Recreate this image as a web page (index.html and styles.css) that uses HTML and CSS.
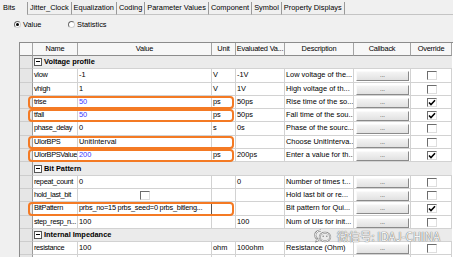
FILE: index.html
```html
<!DOCTYPE html>
<html lang="en">
<head>
    <meta charset="UTF-8">
    <title>Bits</title>
    <link rel="stylesheet" href="styles.css">
</head>
<body>
    <div class="tabs">
        <span class="tab active">Bits</span>
        <span class="tab">Jitter_Clock</span>
        <span class="tab">Equalization</span>
        <span class="tab">Coding</span>
        <span class="tab">Parameter Values</span>
        <span class="tab">Component</span>
        <span class="tab">Symbol</span>
        <span class="tab">Property Displays</span>
        <span class="tab-fill"></span>
    </div>

    <div class="mode">
        <label class="radio on"><span class="dot"></span>Value</label>
        <label class="radio"><span class="dot"></span>Statistics</label>
    </div>

    <div class="grid">
        <div class="row head">
            <div class="gut"></div>
            <div>Name</div>
            <div>Value</div>
            <div>Unit</div>
            <div>Evaluated Va...</div>
            <div>Description</div>
            <div>Callback</div>
            <div>Override</div>
        </div>

        <div class="row section">
            <div class="gut"></div>
            <div class="title"><span class="fold"></span>Voltage profile</div>
        </div>
        <div class="row">
            <div class="gut"></div>
            <div>vlow</div>
            <div>-1</div>
            <div>V</div>
            <div>-1V</div>
            <div>Low voltage of the...</div>
            <div><span class="dots">...</span></div>
            <div><span class="chk"></span></div>
        </div>
        <div class="row">
            <div class="gut"></div>
            <div>vhigh</div>
            <div>1</div>
            <div>V</div>
            <div>1V</div>
            <div>High voltage of th...</div>
            <div><span class="dots">...</span></div>
            <div><span class="chk"></span></div>
        </div>
        <div class="row mark">
            <div class="gut"></div>
            <div>trise</div>
            <div class="blue">50</div>
            <div>ps</div>
            <div>50ps</div>
            <div>Rise time of the so...</div>
            <div><span class="dots">...</span></div>
            <div><span class="chk"><svg viewBox="0 0 8 7"><path d="M1 3.4 L3 5.6 L7 1.2" fill="none" stroke="#000" stroke-width="1.5"/></svg></span></div>
        </div>
        <div class="row mark">
            <div class="gut"></div>
            <div>tfall</div>
            <div class="blue">50</div>
            <div>ps</div>
            <div>50ps</div>
            <div>Fall time of the sou...</div>
            <div><span class="dots">...</span></div>
            <div><span class="chk"><svg viewBox="0 0 8 7"><path d="M1 3.4 L3 5.6 L7 1.2" fill="none" stroke="#000" stroke-width="1.5"/></svg></span></div>
        </div>
        <div class="row">
            <div class="gut"></div>
            <div>phase_delay</div>
            <div>0</div>
            <div>s</div>
            <div>0s</div>
            <div>Phase of the sourc...</div>
            <div><span class="dots">...</span></div>
            <div><span class="chk"></span></div>
        </div>
        <div class="row mark">
            <div class="gut"></div>
            <div>UIorBPS</div>
            <div>UnitInterval</div>
            <div></div>
            <div></div>
            <div>Choose UnitInterva...</div>
            <div><span class="dots">...</span></div>
            <div><span class="chk"></span></div>
        </div>
        <div class="row mark">
            <div class="gut"></div>
            <div>UIorBPSValue</div>
            <div class="blue">200</div>
            <div>ps</div>
            <div>200ps</div>
            <div>Enter a value for th...</div>
            <div><span class="dots">...</span></div>
            <div><span class="chk"><svg viewBox="0 0 8 7"><path d="M1 3.4 L3 5.6 L7 1.2" fill="none" stroke="#000" stroke-width="1.5"/></svg></span></div>
        </div>

        <div class="row section">
            <div class="gut"></div>
            <div class="title"><span class="fold"></span>Bit Pattern</div>
        </div>
        <div class="row">
            <div class="gut"></div>
            <div>repeat_count</div>
            <div>0</div>
            <div></div>
            <div>0</div>
            <div>Number of times t...</div>
            <div><span class="dots">...</span></div>
            <div><span class="chk"></span></div>
        </div>
        <div class="row">
            <div class="gut"></div>
            <div>hold_last_bit</div>
            <div><span class="chk"></span></div>
            <div></div>
            <div></div>
            <div>Hold last bit or re...</div>
            <div><span class="dots">...</span></div>
            <div><span class="chk"></span></div>
        </div>
        <div class="row mark">
            <div class="gut"></div>
            <div>BitPattern</div>
            <div class="edit">prbs_no=15 prbs_seed=0 prbs_bitleng...</div>
            <div></div>
            <div></div>
            <div>Bit pattern for Qui...</div>
            <div><span class="dots">...</span></div>
            <div><span class="chk"><svg viewBox="0 0 8 7"><path d="M1 3.4 L3 5.6 L7 1.2" fill="none" stroke="#000" stroke-width="1.5"/></svg></span></div>
        </div>
        <div class="row">
            <div class="gut"></div>
            <div>step_resp_n...</div>
            <div>100</div>
            <div></div>
            <div>100</div>
            <div>Num of UIs for init...</div>
            <div><span class="dots">...</span></div>
            <div><span class="chk"></span></div>
        </div>

        <div class="row section">
            <div class="gut"></div>
            <div class="title"><span class="fold"></span>Internal Impedance</div>
        </div>
        <div class="row">
            <div class="gut"></div>
            <div>resistance</div>
            <div>100</div>
            <div>ohm</div>
            <div>100ohm</div>
            <div>Resistance (Ohm)</div>
            <div><span class="dots">...</span></div>
            <div><span class="chk"></span></div>
        </div>
        <div class="row">
            <div class="gut"></div>
            <div></div>
            <div></div>
            <div></div>
            <div></div>
            <div></div>
            <div></div>
            <div></div>
        </div>
    </div>

    <div class="wm">
        <svg class="wm-icon" viewBox="0 0 18 14" width="18" height="14">
            <path d="M7 1.5 C3.6 1.5 1.2 3.6 1.2 6.2 C1.2 7.7 2 8.9 3.2 9.8 L2.7 11.8 L5 10.6" fill="none" stroke="#777" stroke-width="2"/>
            <path d="M7 1.5 C3.6 1.5 1.2 3.6 1.2 6.2 C1.2 7.7 2 8.9 3.2 9.8 L2.7 11.8 L5 10.6" fill="none" stroke="#f6f6f6" stroke-width="1"/>
            <ellipse cx="11" cy="8" rx="5.2" ry="4.2" fill="none" stroke="#777" stroke-width="2"/>
            <ellipse cx="11" cy="8" rx="5.2" ry="4.2" fill="none" stroke="#f6f6f6" stroke-width="1"/>
            <circle cx="9.2" cy="7.2" r="0.8" fill="#888"/>
            <circle cx="12.8" cy="7.2" r="0.8" fill="#888"/>
        </svg>
        <span>微信号: IDAJ-CHINA</span>
    </div>
</body>
</html>
```

FILE: styles.css
```css
body {
    margin: 0;
    width: 453px;
    height: 257px;
    overflow: hidden;
    position: relative;
    background: #f0f0f0;
    font-family: "Liberation Sans", Arial, sans-serif;
    font-size: 7.4px;
    color: #000;
}

/* tab strip */
.tabs {
    display: flex;
    height: 15px;
}
.tab {
    margin-top: 2px;
    padding: 0 2px 0 2px;
    line-height: 11px;
    border-left: 1px solid #9a9a9a;
    border-bottom: 1px solid #c4c4c4;
    white-space: nowrap;
}
.tab.active {
    width: 27px;
    box-sizing: border-box;
    margin-top: 0;
    padding: 2px 0 0 3px;
    border: 0;
}
.tab-fill {
    flex: 1;
    margin-top: 2px;
    border-left: 1px solid #9a9a9a;
    border-bottom: 1px solid #c4c4c4;
}

/* value / statistics */
.mode {
    display: flex;
    height: 27px;
    box-sizing: border-box;
    padding: 6px 0 0 14px;
}
.radio {
    display: flex;
    align-items: center;
    gap: 2px;
    width: 54px;
    height: 7px;
}
.dot {
    width: 7px;
    height: 7px;
    box-sizing: border-box;
    border-radius: 50%;
    border: 1px solid;
    border-color: #6a6a6a #d0d0d0 #d0d0d0 #6a6a6a;
    background: #fff;
    position: relative;
}
.radio.on .dot::after {
    content: "";
    position: absolute;
    left: 1px;
    top: 1px;
    width: 3px;
    height: 3px;
    border-radius: 50%;
    background: #000;
}

/* parameter table */
.grid {
    margin-left: 19px;
    width: 433px;
    border-left: 1px solid #8c8c8c;
    border-top: 1px solid #8c8c8c;
    background: #fff;
}
.row {
    display: grid;
    grid-template-columns: 13px 45px 134px 24px 49px 69px 57px 41px;
    height: 13.3px;
    position: relative;
}
.row > div {
    box-sizing: border-box;
    border-right: 1px solid #d2d2d2;
    border-bottom: 1px solid #d2d2d2;
    padding-left: 1px;
    line-height: 12px;
    white-space: nowrap;
    overflow: hidden;
}
.row > div:nth-child(2) {
    letter-spacing: -0.35px;
}
.row > .gut {
    background: #e6e6e6;
    border-right-color: #9c9c9c;
    border-bottom-color: #cdcdcd;
}
.row.head {
    height: 13px;
}
.row.head > div {
    background: #f7f7f7;
    text-align: center;
    letter-spacing: -0.2px;
    padding: 0;
    border-right-color: #a4a4a4;
    border-bottom-color: #8c8c8c;
}
.row.section > .title {
    grid-column: 2 / -1;
    display: flex;
    align-items: center;
    gap: 2px;
    background: #ebebeb;
    font-weight: bold;
    letter-spacing: 0;
    border-right: 0;
}
.fold {
    width: 8px;
    height: 8px;
    box-sizing: border-box;
    border: 1px solid #555;
    background: #fff;
    position: relative;
}
.fold::after {
    content: "";
    position: absolute;
    left: 1px;
    right: 1px;
    top: 2px;
    height: 1px;
    background: #000;
}
.blue {
    color: #3a3aff;
}
.row > .edit {
    letter-spacing: -0.25px;
    border-right-color: #555;
}

/* callback buttons and override boxes */
.dots {
    display: block;
    height: 10px;
    margin: 2px 1px 0 1px;
    box-sizing: border-box;
    border: 1px solid;
    border-color: #fafafa #8a8a8a #8a8a8a #fafafa;
    background: linear-gradient(#f4f4f4, #e1e1e1);
    text-align: center;
    font-size: 6px;
    line-height: 6px;
}
.chk {
    display: block;
    width: 10px;
    height: 9px;
    margin: 2px auto 0;
    box-sizing: border-box;
    border: 1px solid;
    border-color: #6d6d6d #dedede #dedede #6d6d6d;
    background: #fff;
}
.chk svg {
    display: block;
    width: 8px;
    height: 7px;
}

/* annotation boxes */
.row.mark::after {
    content: "";
    position: absolute;
    left: 8px;
    top: 0;
    width: 206px;
    height: 13.3px;
    box-sizing: border-box;
    border: 2px solid #f47a24;
    border-radius: 4px;
    pointer-events: none;
}

/* watermark */
.wm {
    position: absolute;
    left: 314px;
    top: 229px;
    display: flex;
    align-items: center;
    gap: 5px;
    font-family: "Noto Sans CJK SC", sans-serif;
    font-size: 11.5px;
    line-height: 14px;
    color: #f6f6f6;
    text-shadow: 0 0 1px #666, 0 0 1px #777;
}
```
